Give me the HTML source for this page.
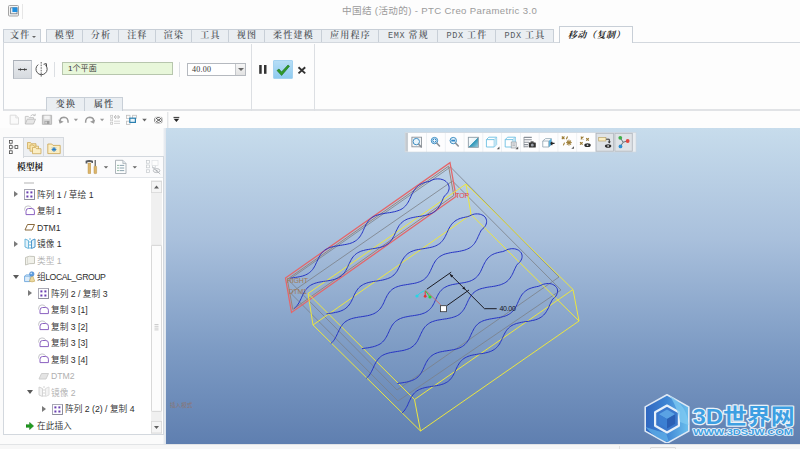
<!DOCTYPE html>
<html lang="zh-CN">
<head>
<meta charset="utf-8">
<title>中国结 (活动的) - PTC Creo Parametric 3.0</title>
<style>
*{box-sizing:border-box;margin:0;padding:0}
html,body{width:800px;height:449px;overflow:hidden;background:#fdfdfd}
body{position:relative;font-family:"Liberation Sans","Noto Sans CJK SC",sans-serif;color:#333}
.abs{position:absolute}
#title{left:0;top:0;width:800px;height:29px;background:#fdfdfd}
#title .t{position:absolute;left:342px;top:2.500px;font-size:9.6px;color:#9b9b9b;white-space:nowrap;letter-spacing:.35px}
#tabs{left:0;top:29px;width:800px;height:14px;z-index:2}
.tab{position:absolute;top:0;height:13px;border:1px solid #c8cfd7;border-bottom:none;background:#eaeef2;font-family:"Liberation Serif","Noto Serif CJK SC",serif;font-weight:600;font-size:9px;line-height:11.5px;text-align:center;color:#55595e;white-space:nowrap;overflow:hidden;letter-spacing:1.2px;padding-left:1px}
.tab.act{background:#fdfdfd;font-style:italic;font-weight:700;color:#222;top:-3px;height:17px;line-height:16px;letter-spacing:.6px}
#ribbon{left:3px;top:42px;width:797px;height:69px;border-top:1px solid #d3d8de;border-left:1px solid #d3d8de;border-bottom:2px solid #e1e3e6;background:#fdfdfd}
#qbar{left:0;top:112px;width:800px;height:16px;background:#fdfdfd}
#left{left:0;top:128px;width:166px;height:316px;background:linear-gradient(90deg,#fbfbfb 0,#fbfbfb 163px,#e9edf2 164px,#dfe5ec 166px)}
#view{left:166px;top:128px;width:634px;height:316px;background:linear-gradient(180deg,#c7dcec 0%,#a9c0dc 35%,#7d9bc4 70%,#5f7fb0 100%)}
#status{left:0;top:444px;width:800px;height:5px;background:#f7f7f7;border-top:1px solid #e2e4e6}

.vsep{position:absolute;width:1px;background:#dcdfe3}
#btn1{left:13px;top:60px;width:19px;height:19px;border:1px solid #c3c8cf;border-top-color:#a9afb7;border-left-color:#b0b6be;background:linear-gradient(180deg,#eaecef,#d6dadf)}
#inp{left:62px;top:62px;width:111px;height:13px;border:1px solid #b7c6ad;background:#e8f7da;font-family:"Liberation Sans","Noto Sans CJK SC",sans-serif;font-size:8.1px;line-height:11px;padding-left:5px;color:#333;font-weight:350}
#combo{left:187px;top:63px;width:59px;height:13px;border:1px solid #b5b9bf;background:#fff;font-family:"Liberation Serif",serif;font-size:8px;line-height:11px;padding-left:4px;color:#333;letter-spacing:.25px}
#combo i{position:absolute;right:0;top:0;width:10px;height:11px;border-left:1px solid #c5c8cc;background:linear-gradient(180deg,#f6f6f6,#e2e2e2)}
#combo i:after{content:"";position:absolute;left:2px;top:4px;border:3px solid transparent;border-top:3px solid #666;border-bottom:none}
#chk{left:273px;top:60px;width:20px;height:19px;background:linear-gradient(180deg,#b7def6,#8fcbf0);border:1px solid #a5d3f1;border-radius:1px}
.btab{position:absolute;top:97px;height:14px;border:1px solid #c8cfd7;border-bottom:none;background:#eaeef2;font-family:"Liberation Serif","Noto Serif CJK SC",serif;font-weight:600;font-size:9px;line-height:12.5px;text-align:center;color:#44484d;letter-spacing:1.2px;padding-left:1px}
.ltab{position:absolute;top:137px;height:20px;width:21px;border:1px solid #d5d9de;background:#eef0f3}
#panel{left:3px;top:156px;width:161px;height:279px;border:1px solid #d3d8de;background:#fbfbfc}
#tree{left:4px;top:177px;width:159px;height:257px;border-top:1px solid #e3e6ea;background:#fff;overflow:hidden}
.ti{position:absolute;font-size:8.7px;line-height:12px;white-space:nowrap;color:#2e2e2e;font-weight:350}
.ti.g{color:#b0b0b0}
.ar{position:absolute;width:0;height:0}
.ar.r{border:3px solid transparent;border-left:4px solid #7a7a7a;border-right:none}
.ar.d{border:3px solid transparent;border-top:4px solid #5a5a5a;border-bottom:none}
#sb{left:150px;top:180px;width:11px;height:254px;background:#f1f1f1;border-left:1px solid #e3e3e3}
</style>
</head>
<body>
<div id="title" class="abs"><span class="t">中国结 (活动的) - PTC Creo Parametric 3.0</span><svg class="abs" style="left:7px;top:4px" width="18" height="16" viewBox="0 0 18 16"><rect x="1.500" y="1.500" width="10" height="10.500" rx="1" fill="#f4f4f4" stroke="#9a9a9a" stroke-width=".9"/><rect x="3.600" y="3.800" width="6.400" height="6" fill="#e9eef2" stroke="#6c7780" stroke-width=".8"/><rect x="5.400" y="3.400" width="5" height="4.600" fill="#1f8fe0"/><path d="M15.500 0v15" stroke="#e3e3e3" stroke-width=".9"/></svg></div>
<div id="tabs" class="abs">
<div class="tab" style="left:3px;width:38px;text-align:left;padding-left:6px">文件<i style="position:absolute;left:27.500px;top:5.500px;border:2.300px solid transparent;border-top:2.600px solid #666;border-bottom:none"></i></div>
<div class="tab" style="left:46px;width:37px">模型</div>
<div class="tab" style="left:82px;width:37px">分析</div>
<div class="tab" style="left:118px;width:38px">注释</div>
<div class="tab" style="left:155px;width:37px">渲染</div>
<div class="tab" style="left:191px;width:38px">工具</div>
<div class="tab" style="left:228px;width:37px">视图</div>
<div class="tab" style="left:264px;width:58px">柔性建模</div>
<div class="tab" style="left:321px;width:58px">应用程序</div>
<div class="tab" style="left:378px;width:60px"><span style="font-family:'Liberation Mono',monospace;font-weight:400;font-size:8.500px;letter-spacing:.6px">EMX</span> 常规</div>
<div class="tab" style="left:437px;width:59px"><span style="font-family:'Liberation Mono',monospace;font-weight:400;font-size:8.500px;letter-spacing:.6px">PDX</span> 工件</div>
<div class="tab" style="left:495px;width:59px"><span style="font-family:'Liberation Mono',monospace;font-weight:400;font-size:8.500px;letter-spacing:.6px">PDX</span> 工具</div>
<div class="tab act" style="left:559px;width:74px">移动（复制）</div>
</div>
<div id="ribbon" class="abs"></div>
<div id="qbar" class="abs"><svg width="200" height="16" viewBox="0 112 200 16">
<path d="M10.200 115.200h5.600l2.700 2.700v6.300h-8.300z" fill="#fafafa" stroke="#d9d9d9" stroke-width=".9"/><path d="M15.800 115.200v2.700h2.700" fill="none" stroke="#d9d9d9" stroke-width=".8"/>
<path d="M25.300 124v-7.600h3l1 1.200h4.200v1.600" fill="#f1f1f1" stroke="#c4c4c4" stroke-width=".9"/><path d="M25.300 124l2-4.800h8.200l-2 4.800z" fill="#e6e6e6" stroke="#bdbdbd" stroke-width=".9"/><path d="M30.500 116q2-2.200 4.200-.8M35.200 113.800v1.800h-1.800" fill="none" stroke="#bdbdbd" stroke-width=".9"/>
<path d="M42.400 115.300h9.200v9h-9.200z" fill="#d2d2d2" stroke="#b3b3b3" stroke-width=".9"/><rect x="44.200" y="115.700" width="5.600" height="3.600" fill="#f3f3f3"/><rect x="44.600" y="121" width="4.800" height="3" fill="#9f9f9f"/><rect x="45.400" y="121.600" width="1.300" height="2" fill="#e8e8e8"/>
<path d="M60.500 122.600q-1.600-5 3.400-5.400q4.400 0 4.200 5.600" fill="none" stroke="#9b9b9b" stroke-width="1.500"/><path d="M58.500 119.400l1.200 4.400l4-2z" fill="#9b9b9b"/>
<path d="M73.800 118.700h4.200l-2.100 2.500z" fill="#9a9a9a"/>
<path d="M93.200 122.600q1.600-5-3.400-5.400q-4.400 0-4.200 5.600" fill="none" stroke="#9b9b9b" stroke-width="1.500"/><path d="M95.200 119.400l-1.200 4.400l-4-2z" fill="#9b9b9b"/>
<path d="M100 118.700h4.200l-2.100 2.500z" fill="#9a9a9a"/>
<g fill="none" stroke="#c9c9c9" stroke-width=".8"><rect x="110.600" y="115.300" width="2" height="2"/><rect x="110.600" y="118.800" width="2" height="2"/><rect x="110.600" y="122.300" width="2" height="2"/><path d="M114 121.200h6M114 123.400h6"/></g>
<path d="M114.400 117h5M117.600 115l2 2l-2 2M116 115l-1.800 2l1.800 2" fill="none" stroke="#b5b5b5" stroke-width=".9"/>
<g fill="#fafafa" stroke="#bdbdbd" stroke-width=".8"><rect x="126.400" y="115.300" width="3.600" height="3.200"/><rect x="132.600" y="115.300" width="3.800" height="3.200"/><rect x="126.400" y="121.200" width="3.600" height="3.200"/></g>
<rect x="129.800" y="118.200" width="5.600" height="4.200" fill="#eaf5fb" stroke="#2a7fb0" stroke-width="1.200"/>
<path d="M142.200 118.700h4.600l-2.300 2.700z" fill="#666"/>
<path d="M154.800 117.400h7v5.400h-7z" fill="none" stroke="#555" stroke-width=".9"/><path d="M154.500 117l7.600 6.200M162.100 117l-7.600 6.200" stroke="#fdfdfd" stroke-width="2.200"/><path d="M155.600 117.800l6 4.600M161.600 117.800l-6 4.600" stroke="#555" stroke-width="1"/>
<path d="M167.800 111v17" stroke="#d6d9dd" stroke-width=".9"/>
<path d="M173.500 117.400h5.800" stroke="#333" stroke-width="1"/><path d="M173.600 118.800h5.600l-2.800 3.300z" fill="#222"/>
</svg></div>
<div id="left" class="abs"></div>
<div id="btn1" class="abs"><svg width="17" height="17" viewBox="0.5 0.5 17 17"><path d="M6 9H12M6.200 9L7.400 8M6.200 9L7.400 10M11.800 9L10.600 8M11.800 9L10.600 10" stroke="#3a3a3a" stroke-width=".9" fill="none"/><circle cx="5.400" cy="9" r=".8" fill="#3a3a3a"/><circle cx="12.600" cy="9" r=".8" fill="#3a3a3a"/></svg></div>
<svg class="abs" style="left:34px;top:60px" width="16" height="20" viewBox="0 0 16 20"><path d="M7.200 2V16.800" stroke="#555" stroke-width=".9" stroke-dasharray="1.600 1"/><path d="M4.200 4.600A5.600 5.600 0 1 0 11.600 5.200" fill="none" stroke="#555" stroke-width="1"/><path d="M9.600 4.300L12.300 3.600L12.600 6.400" fill="none" stroke="#444" stroke-width="1"/></svg>
<div class="vsep" style="left:54px;top:62px;height:15px"></div>
<div id="inp" class="abs">1个平面</div>
<div class="vsep" style="left:179px;top:62px;height:15px"></div>
<div id="combo" class="abs">40.00<i></i></div>
<div class="vsep" style="left:251px;top:44px;height:67px"></div>
<svg class="abs" style="left:258px;top:64px" width="10" height="11" viewBox="0 0 10 11"><rect x="1.200" y="1" width="2.500" height="8.800" fill="#333"/><rect x="6" y="1" width="2.500" height="8.800" fill="#333"/></svg>
<div id="chk" class="abs"><svg width="18" height="18" viewBox="0 0 18 18"><path d="M3 9.5L5 8L7.5 11L14 4L15.5 5.2L7.6 14.5Z" fill="#2e9a2a" stroke="#1c6f1b" stroke-width=".6"/></svg></div>
<svg class="abs" style="left:297px;top:65px" width="10" height="10" viewBox="0 0 10 10"><path d="M1.500 2.200L8.200 8.400M8.200 2.200L1.500 8.400" stroke="#333" stroke-width="1.900"/></svg>
<div class="vsep" style="left:314px;top:44px;height:67px"></div>
<div class="btab" style="left:46px;width:39px">变换</div><div class="btab" style="left:84px;width:39px">属性</div>
<div id="panel" class="abs"></div>
<div class="ltab" style="left:23px"></div><div class="ltab" style="left:43px"></div><div class="ltab" style="left:3px;background:#fbfbfc;border-bottom:none;height:21px"></div>
<div class="abs" style="left:17px;top:161px;font-family:'Liberation Serif','Noto Serif CJK SC',serif;font-weight:700;font-size:8.8px;line-height:12px;color:#222">模型树</div>
<div id="tree" class="abs"></div>

<svg class="abs" style="left:3px;top:137px" width="62" height="20" viewBox="0 0 62 20">
<g fill="#fff" stroke="#4a4a4a" stroke-width=".8"><rect x="6.4" y="3.4" width="2.8" height="2.8"/><rect x="6.4" y="8.6" width="2.8" height="2.8"/><rect x="6.4" y="13.8" width="2.8" height="2.8"/><rect x="12" y="8.6" width="2.8" height="2.8"/></g>
<path d="M7.8 6.2v2.4M7.8 11.4v2.4M9.2 10h2.8" stroke="#8a8a8a" stroke-width=".6"/>
<g stroke="#c9a24e" stroke-width=".7"><path d="M24.5 5.5h3l1 1.2h4.5v5h-8.5z" fill="#f7e3a8"/><path d="M27 8h3l1 1.2h4.5v5h-8.5z" fill="#f9e8b4"/><path d="M29.5 10.5h3l1 1.200h4.500v5h-8.500z" fill="#fbeec4"/></g>
<path d="M44.800 7h4l1.200 1.400h7.200v8.200h-12.400z" fill="#fbeec4" stroke="#c9a24e" stroke-width=".8"/>
<path d="M51 10v4.800M48.600 12.400h4.800M49.300 10.700l3.400 3.400M52.700 10.700l-3.400 3.400" stroke="#1f78c8" stroke-width="1"/>
</svg>
<svg class="abs" style="left:84px;top:158px" width="80" height="18" viewBox="0 0 80 18">
<path d="M1.600 2.800q3.600-1.600 7.400 0v2.200h-1.600v-1h-4v1.600h-1.800z" fill="#55595f"/>
<rect x="4" y="5" width="2.800" height="10.600" fill="#dcb56a" stroke="#b58f45" stroke-width=".4"/>
<path d="M11.200 2v6.400" stroke="#4a4a4a" stroke-width="1.100"/>
<rect x="10" y="8.200" width="2.600" height="7.400" rx=".6" fill="#dcb56a" stroke="#b58f45" stroke-width=".5"/>
<path d="M19.800 8.200h4.400l-2.200 2.400z" fill="#666"/>
<path d="M31.500 2.300h7.300l3.200 3.200v10h-10.500z" fill="#fcfdfd" stroke="#9aa2aa" stroke-width=".8"/>
<path d="M38.800 2.300v3.200h3.200" fill="#dde5ea" stroke="#9aa2aa" stroke-width=".6"/>
<path d="M35.600 7.400h4.600M35.600 10h4.600M35.600 12.600h4.600" stroke="#7f98a6" stroke-width=".9"/>
<path d="M33.400 7.400h1.200M33.400 10h1.200M33.400 12.600h1.200" stroke="#4d8f6c" stroke-width="1"/>
<path d="M48.600 8.200h4.400l-2.200 2.400z" fill="#666"/>
<g fill="#fdfdfd" stroke="#c4c8cc" stroke-width=".7"><rect x="62.600" y="2.400" width="2.800" height="2.800"/><rect x="62.600" y="7" width="2.800" height="2.800"/><rect x="62.600" y="11.800" width="2.800" height="2.800"/><rect x="68.400" y="7" width="2.800" height="2.800"/><rect x="68" y="2.400" width="6" height="5" stroke="#dfe2e5"/></g>
<ellipse cx="72.600" cy="12.600" rx="3.300" ry="2" fill="none" stroke="#a9adb2" stroke-width=".8"/><circle cx="72.600" cy="12.600" r=".9" fill="#a9adb2"/><path d="M69 9.600l7.200 6.400" stroke="#a9adb2" stroke-width=".8"/>
</svg>
<svg class="abs" style="left:151px;top:180px" width="11" height="254" viewBox="0 0 11 254">
<rect x="0" y="0" width="11" height="254" fill="#f0f0f0"/>
<rect x=".4" y="1.400" width="10.200" height="11.200" fill="#f5f5f5" stroke="#d8d8d8" stroke-width=".8"/>
<path d="M3 8.400h5l-2.500-3z" fill="#606060"/>
<rect x=".4" y="65.400" width="10.200" height="166" rx="1" fill="#fcfcfc" stroke="#cdcdcd" stroke-width=".8"/>
<path d="M3.500 144.500h4M3.500 146.300h4M3.500 148.100h4M3.500 149.900h4" stroke="#b8b8b8" stroke-width=".7"/>
<rect x=".4" y="241.400" width="10.200" height="11.600" fill="#f5f5f5" stroke="#d8d8d8" stroke-width=".8"/>
<path d="M3 246h5l-2.500 3z" fill="#606060"/>
</svg>
<div class="abs" style="left:24px;top:182px;width:10px;height:2px;background:#d9d9d9"></div>

<!--TREE-->
<div class="ar r" style="left:14.3px;top:191.3px"></div>
<svg class="abs" style="left:24.3px;top:189.1px" width="11" height="11" viewBox="0 0 11 11"><rect x=".5" y=".5" width="10" height="10" fill="#fdfdff" stroke="#a9a9b4"/><path d="M.5 10.500h10v-10" fill="none" stroke="#8d8d9a"/><rect x="2.400" y="2.400" width="2" height="2" fill="#6a3fb0"/><rect x="6.400" y="2.400" width="2" height="2" fill="#6a3fb0"/><rect x="2.400" y="6.500" width="2" height="2" fill="#6a3fb0"/><rect x="6.400" y="6.500" width="2" height="2" fill="#6a3fb0"/></svg>
<div class="ti" style="left:37.0px;top:188.6px">阵列 1 / 草绘 1</div>
<svg class="abs" style="left:24.3px;top:204.9px" width="12" height="11" viewBox="0 0 12 11"><path d="M.6 5.500V4.300Q.6 .9 4 .9Q7 .9 7.600 3" fill="none" stroke="#bdbdc2" stroke-width=".9"/><path d="M2 9.600V6.200Q2 3.500 4.600 3.500H7.800Q10.400 3.500 10.400 6.200V9.600Z" fill="#fff" stroke="#8a60c0" stroke-width="1"/></svg>
<div class="ti" style="left:37.0px;top:205.1px">复制 1</div>
<svg class="abs" style="left:24.3px;top:223.0px" width="12" height="9" viewBox="0 0 12 9"><path d="M3.500 1.500H10.500L8 7H1Z" fill="#fff" stroke="#8a6a3c" stroke-width="1"/></svg>
<div class="ti" style="left:37.0px;top:221.6px">DTM1</div>
<div class="ar r" style="left:14.3px;top:240.8px"></div>
<svg class="abs" style="left:24.3px;top:237.8px" width="12" height="12" viewBox="0 0 12 12"><path d="M1 1L4.500 2.500V10.500L1 9Z" fill="#e4f2fa" stroke="#5fb0d8" stroke-width=".9"/><path d="M11 1L7.500 2.500V10.500L11 9Z" fill="#e4f2fa" stroke="#3d8fc8" stroke-width=".9"/><path d="M6 0V12" stroke="#5fb0d8" stroke-width=".9" stroke-dasharray="2 1"/></svg>
<div class="ti" style="left:37.0px;top:238.1px">镜像 1</div>
<svg class="abs" style="left:24.3px;top:254.8px" width="12" height="11" viewBox="0 0 12 11"><path d="M1.500 2.500Q5 .5 10.500 1.500V8.500Q5 8 1.500 10Z" fill="#f1f1ea" stroke="#c6c6bc" stroke-width="1"/><path d="M3.500 1.600V8.800" fill="none" stroke="#d4d4cb" stroke-width=".8"/></svg>
<div class="ti g" style="left:37.0px;top:254.6px">类型 1</div>
<div class="ar d" style="left:13.3px;top:274.8px"></div>
<svg class="abs" style="left:24.3px;top:270.8px" width="12" height="12" viewBox="0 0 12 12"><path d="M.6 5.200H6.200V10.600H.6Z" fill="#dcecf9" stroke="#5a9bd8" stroke-width=".8"/><path d="M.6 5.200L2.200 3.800H7.600L6.200 5.200" fill="#b9d9f3" stroke="#5a9bd8" stroke-width=".6"/><path d="M8.200 3.600L10.800 10.200Q8 11.600 5.400 10.200Z" fill="#ecd9a0" stroke="#bfa457" stroke-width=".6"/><circle cx="7.800" cy="3" r="2.300" fill="#5f9fe0" stroke="#3a78c4" stroke-width=".5"/><circle cx="7.200" cy="2.400" r=".8" fill="#cfe4f7"/></svg>
<div class="ti" style="left:37.0px;top:271.1px;letter-spacing:-.45px">组LOCAL_GROUP</div>
<div class="ar r" style="left:28.3px;top:290.3px"></div>
<svg class="abs" style="left:38.3px;top:288.1px" width="11" height="11" viewBox="0 0 11 11"><rect x=".5" y=".5" width="10" height="10" fill="#fdfdff" stroke="#a9a9b4"/><path d="M.5 10.500h10v-10" fill="none" stroke="#8d8d9a"/><rect x="2.400" y="2.400" width="2" height="2" fill="#6a3fb0"/><rect x="6.400" y="2.400" width="2" height="2" fill="#6a3fb0"/><rect x="2.400" y="6.500" width="2" height="2" fill="#6a3fb0"/><rect x="6.400" y="6.500" width="2" height="2" fill="#6a3fb0"/></svg>
<div class="ti" style="left:51.0px;top:287.6px">阵列 2 / 复制 3</div>
<svg class="abs" style="left:38.3px;top:303.9px" width="12" height="11" viewBox="0 0 12 11"><path d="M.6 5.500V4.300Q.6 .9 4 .9Q7 .9 7.600 3" fill="none" stroke="#bdbdc2" stroke-width=".9"/><path d="M2 9.600V6.200Q2 3.500 4.600 3.500H7.800Q10.400 3.500 10.400 6.200V9.600Z" fill="#fff" stroke="#8a60c0" stroke-width="1"/></svg>
<div class="ti" style="left:51.0px;top:304.1px">复制 3 [1]</div>
<svg class="abs" style="left:38.3px;top:320.4px" width="12" height="11" viewBox="0 0 12 11"><path d="M.6 5.500V4.300Q.6 .9 4 .9Q7 .9 7.600 3" fill="none" stroke="#bdbdc2" stroke-width=".9"/><path d="M2 9.600V6.200Q2 3.500 4.600 3.500H7.800Q10.400 3.500 10.400 6.200V9.600Z" fill="#fff" stroke="#8a60c0" stroke-width="1"/></svg>
<div class="ti" style="left:51.0px;top:320.6px">复制 3 [2]</div>
<svg class="abs" style="left:38.3px;top:336.9px" width="12" height="11" viewBox="0 0 12 11"><path d="M.6 5.500V4.300Q.6 .9 4 .9Q7 .9 7.600 3" fill="none" stroke="#bdbdc2" stroke-width=".9"/><path d="M2 9.600V6.200Q2 3.500 4.600 3.500H7.800Q10.400 3.500 10.400 6.200V9.600Z" fill="#fff" stroke="#8a60c0" stroke-width="1"/></svg>
<div class="ti" style="left:51.0px;top:337.1px">复制 3 [3]</div>
<svg class="abs" style="left:38.3px;top:353.4px" width="12" height="11" viewBox="0 0 12 11"><path d="M.6 5.500V4.300Q.6 .9 4 .9Q7 .9 7.600 3" fill="none" stroke="#bdbdc2" stroke-width=".9"/><path d="M2 9.600V6.200Q2 3.500 4.600 3.500H7.800Q10.400 3.500 10.400 6.200V9.600Z" fill="#fff" stroke="#8a60c0" stroke-width="1"/></svg>
<div class="ti" style="left:51.0px;top:353.6px">复制 3 [4]</div>
<svg class="abs" style="left:38.3px;top:371.5px" width="12" height="9" viewBox="0 0 12 9"><path d="M3.500 1.500H10.500L8 7H1Z" fill="#e4e4e4" stroke="#cfcfcf" stroke-width="1"/></svg>
<div class="ti g" style="left:51.0px;top:370.1px">DTM2</div>
<div class="ar d" style="left:27.3px;top:390.3px"></div>
<svg class="abs" style="left:38.3px;top:386.3px" width="12" height="12" viewBox="0 0 12 12"><path d="M1 1L4.500 2.500V10.500L1 9Z" fill="#f3f3f3" stroke="#cfcfcf" stroke-width=".9"/><path d="M11 1L7.500 2.500V10.500L11 9Z" fill="#f3f3f3" stroke="#dadada" stroke-width=".9"/><path d="M6 0V12" stroke="#cfcfcf" stroke-width=".9" stroke-dasharray="2 1"/></svg>
<div class="ti g" style="left:51.0px;top:386.6px">镜像 2</div>
<div class="ar r" style="left:42.3px;top:405.8px"></div>
<svg class="abs" style="left:52.3px;top:403.6px" width="11" height="11" viewBox="0 0 11 11"><rect x=".5" y=".5" width="10" height="10" fill="#fdfdff" stroke="#a9a9b4"/><path d="M.5 10.500h10v-10" fill="none" stroke="#8d8d9a"/><rect x="2.400" y="2.400" width="2" height="2" fill="#6a3fb0"/><rect x="6.400" y="2.400" width="2" height="2" fill="#6a3fb0"/><rect x="2.400" y="6.500" width="2" height="2" fill="#6a3fb0"/><rect x="6.400" y="6.500" width="2" height="2" fill="#6a3fb0"/></svg>
<div class="ti" style="left:65.0px;top:403.1px">阵列 2 (2) / 复制 4</div>
<svg class="abs" style="left:25.5px;top:421.6px" width="8" height="8" viewBox="0 0 8 8"><path d="M0 2.700H3.600V.4L7.600 4L3.600 7.600V5.300H0Z" fill="#1f9d1f" stroke="#0c6d0c" stroke-width=".5"/></svg>
<div class="ti" style="left:37px;top:419.600px">在此插入</div>
<!--/TREE-->
<div id="view" class="abs"><!--WIRE--><svg id="wire" width="634" height="315" viewBox="0 0 634 315" style="position:absolute;left:0;top:0">
<path d="M122.5 152.0 L284.5 39.0 L393.0 149.0 L231.0 262.0Z M124.5 165.0 L286.5 53.0 L395.0 162.0 L232.0 273.0Z" fill="none" stroke="#7b8088" stroke-width=".8"/>
<path d="M121.3 151.3 L282.6 38.2 L287.8 67.5 L126.8 181.5Z" fill="none" stroke="#9a8378" stroke-width="1"/>
<path d="M119.5 150.0 L284.0 34.6 L290.0 68.5 L125.5 184.5Z" fill="none" stroke="#e4676a" stroke-width="1.3"/>
<path d="M300.0 56.0 L407.0 161.5 L248.5 271.5 L142.0 165.5 L300.0 56.0 M305.0 86.5 L413.0 193.0 L254.5 303.0 L147.0 197.0 L305.0 86.5 M300.0 56.0 L305.0 86.5 M407.0 161.5 L413.0 193.0 M248.5 271.5 L254.5 303.0 M142.0 165.5 L147.0 197.0" fill="none" stroke="#ece63f" stroke-width="1"/>
<path d="M124.2 150.2 L126.0 150.0 L127.8 149.7 L129.6 149.4 L131.4 149.1 L133.2 148.8 L134.9 148.4 L136.6 148.0 L138.1 147.5 L139.6 146.9 L141.1 146.2 L142.4 145.4 L143.6 144.5 L144.7 143.6 L145.7 142.5 L146.7 141.4 L147.5 140.2 L148.3 138.9 L149.1 137.5 L149.7 136.1 L150.4 134.7 L151.1 133.3 L151.7 131.9 L152.4 130.5 L153.1 129.1 L153.8 127.8 L154.6 126.5 L155.5 125.3 L156.5 124.2 L157.5 123.2 L158.7 122.2 L160.0 121.4 L161.3 120.7 L162.7 120.0 L164.3 119.4 L165.9 119.0 L167.6 118.5 L169.3 118.2 L171.1 117.9 L172.9 117.6 L174.7 117.3 L176.5 117.0 L178.3 116.7 L180.1 116.4 L181.8 116.0 L183.5 115.6 L185.1 115.1 L186.6 114.5 L188.0 113.8 L189.3 113.0 L190.5 112.2 L191.6 111.2 L192.7 110.2 L193.6 109.0 L194.5 107.8 L195.2 106.5 L196.0 105.2 L196.7 103.8 L197.3 102.4 L198.0 100.9 L198.6 99.5 L199.3 98.1 L200.0 96.7 L200.7 95.4 L201.6 94.1 L202.4 92.9 L203.4 91.8 L204.5 90.8 L205.6 89.9 L206.9 89.0 L208.2 88.3 L209.7 87.6 L211.2 87.1 L212.8 86.6 L214.5 86.2 L216.2 85.8 L218.0 85.5 L219.8 85.2 L221.6 84.9 L223.4 84.7 L225.2 84.4 L227.0 84.0 L228.7 83.7 L230.4 83.2 L232.0 82.7 L233.5 82.1 L234.9 81.5 L236.2 80.7 L237.4 79.8 L238.5 78.8 L239.6 77.8 L240.5 76.7 L241.4 75.4 L242.2 74.1 L242.9 72.8 L243.6 71.4 L244.2 70.0 L244.9 68.6 L245.5 67.1 L246.2 65.7 L246.9 64.4 L247.7 63.0 L248.5 61.8 L249.4 60.6 L250.3 59.5 L251.4 58.4 L252.5 57.5 L253.8 56.7 L255.1 55.9 L256.6 55.3 L258.1 54.7 L259.7 54.2 L261.4 53.8 L263.1 53.5 L265.1 52.5 L266.5 51.9 L268.1 51.3 L269.7 51.0 L271.4 50.9 L273.0 50.9 L274.6 51.1 L276.1 51.5 L277.6 52.0 L278.9 52.7 L280.1 53.6 L281.1 54.6 L281.9 55.7 L282.5 56.9 L282.9 58.1 L283.1 59.4 L283.1 60.8 L282.8 62.1 L282.3 63.4 L281.7 64.6 L280.8 65.8 L279.7 66.9 L278.5 67.8 L277.8 69.2 L277.1 70.6 L276.5 72.1 L275.8 73.5 L275.2 74.9 L274.5 76.3 L273.8 77.6 L273.0 78.9 L272.1 80.1 L271.2 81.3 L270.1 82.3 L269.0 83.3 L267.8 84.2 L266.5 84.9 L265.1 85.6 L263.6 86.2 L262.0 86.7 L260.3 87.2 L258.6 87.5 L256.8 87.9 L255.0 88.2 L253.2 88.4 L251.4 88.7 L249.6 89.0 L247.8 89.3 L246.1 89.7 L244.4 90.1 L242.8 90.6 L241.3 91.1 L239.8 91.8 L238.5 92.5 L237.2 93.4 L236.1 94.3 L235.0 95.3 L234.0 96.4 L233.1 97.6 L232.3 98.9 L231.6 100.2 L230.9 101.6 L230.2 103.0 L229.6 104.4 L228.9 105.9 L228.3 107.3 L227.6 108.7 L226.8 110.0 L226.0 111.3 L225.2 112.5 L224.2 113.7 L223.2 114.7 L222.1 115.7 L220.9 116.5 L219.6 117.3 L218.2 118.0 L216.7 118.6 L215.1 119.1 L213.4 119.5 L211.7 119.9 L209.9 120.2 L208.1 120.5 L206.3 120.8 L204.5 121.1 L202.7 121.4 L200.9 121.7 L199.2 122.0 L197.5 122.5 L195.9 122.9 L194.3 123.5 L192.9 124.2 L191.5 124.9 L190.3 125.7 L189.1 126.7 L188.1 127.7 L187.1 128.8 L186.2 130.0 L185.4 131.3 L184.7 132.6 L184.0 134.0 L183.3 135.4 L182.6 136.8 L182.0 138.2 L181.3 139.6 L180.7 141.0 L179.9 142.4 L179.1 143.7 L178.3 144.9 L177.3 146.0 L176.3 147.1 L175.2 148.0 L174.0 148.9 L172.6 149.7 L171.2 150.4 L169.7 150.9 L168.2 151.5 L166.5 151.9 L164.8 152.3 L163.0 152.6 L161.2 152.9 L159.4 153.2 L157.6 153.4 L155.8 153.7 L154.0 154.0 L152.2 154.4 L150.6 154.8 L148.9 155.3 L147.4 155.9 L146.0 156.5 L144.6 157.3 L143.4 158.1 L142.2 159.0 L141.2 160.1 L140.2 161.2 L139.3 162.4 L138.5 163.6 L137.7 165.0 L137.0 166.3 L136.4 167.7 L135.7 169.2 L135.1 170.6 L134.4 172.0 L133.7 173.4 L133.0 174.7 L132.2 176.0 L131.4 177.2 L130.4 178.4 L129.4 179.4 L128.3 180.4" fill="none" stroke="#2634c4" stroke-width="1" stroke-linejoin="round"/>
<path d="M160.5 185.9 L162.3 185.6 L164.1 185.3 L165.9 185.1 L167.7 184.8 L169.5 184.4 L171.2 184.1 L172.9 183.6 L174.5 183.1 L176.0 182.5 L177.4 181.8 L178.7 181.1 L179.9 180.2 L181.0 179.2 L182.1 178.2 L183.0 177.0 L183.9 175.8 L184.7 174.5 L185.4 173.2 L186.1 171.8 L186.7 170.4 L187.4 169.0 L188.0 167.5 L188.7 166.1 L189.4 164.7 L190.2 163.4 L191.0 162.2 L191.8 161.0 L192.8 159.8 L193.9 158.8 L195.0 157.9 L196.3 157.1 L197.6 156.3 L199.1 155.7 L200.6 155.1 L202.2 154.6 L203.9 154.2 L205.6 153.8 L207.4 153.5 L209.2 153.2 L211.0 153.0 L212.9 152.7 L214.7 152.4 L216.4 152.1 L218.1 151.7 L219.8 151.2 L221.4 150.7 L222.9 150.1 L224.3 149.5 L225.6 148.7 L226.8 147.8 L228.0 146.9 L229.0 145.8 L229.9 144.7 L230.8 143.5 L231.6 142.2 L232.3 140.8 L233.0 139.4 L233.7 138.0 L234.3 136.6 L234.9 135.2 L235.6 133.8 L236.3 132.4 L237.1 131.0 L237.9 129.8 L238.8 128.6 L239.7 127.5 L240.8 126.5 L241.9 125.5 L243.2 124.7 L244.5 123.9 L246.0 123.3 L247.5 122.7 L249.1 122.2 L250.8 121.8 L252.5 121.5 L254.3 121.2 L256.1 120.9 L258.0 120.6 L259.8 120.3 L261.6 120.0 L263.3 119.7 L265.1 119.3 L266.7 118.9 L268.3 118.4 L269.8 117.8 L271.2 117.1 L272.5 116.3 L273.8 115.5 L274.9 114.5 L275.9 113.4 L276.8 112.3 L277.7 111.1 L278.5 109.8 L279.2 108.5 L279.9 107.1 L280.6 105.6 L281.2 104.2 L281.9 102.8 L282.5 101.4 L283.2 100.0 L284.0 98.7 L284.8 97.4 L285.7 96.2 L286.7 95.1 L287.7 94.1 L288.9 93.2 L290.1 92.3 L291.5 91.6 L292.9 90.9 L294.4 90.4 L296.0 89.9 L297.7 89.5 L299.5 89.1 L301.2 88.8 L303.8 87.8 L305.2 87.1 L306.8 86.5 L308.3 86.1 L309.9 85.9 L311.5 85.9 L313.0 86.0 L314.4 86.3 L315.8 86.8 L317.0 87.4 L318.1 88.1 L319.0 89.0 L319.7 90.0 L320.2 91.1 L320.5 92.3 L320.6 93.5 L320.5 94.8 L320.2 96.0 L319.7 97.3 L318.9 98.5 L318.0 99.6 L316.9 100.7 L315.7 101.6 L314.9 102.9 L314.2 104.3 L313.5 105.7 L312.9 107.1 L312.2 108.5 L311.6 109.9 L310.9 111.3 L310.2 112.7 L309.4 114.0 L308.6 115.3 L307.7 116.4 L306.7 117.5 L305.6 118.5 L304.4 119.4 L303.1 120.2 L301.7 120.9 L300.3 121.5 L298.7 122.1 L297.1 122.5 L295.4 122.9 L293.6 123.3 L291.8 123.6 L290.0 123.9 L288.2 124.1 L286.4 124.4 L284.6 124.7 L282.8 125.1 L281.1 125.5 L279.5 125.9 L277.9 126.4 L276.5 127.1 L275.1 127.8 L273.8 128.6 L272.6 129.5 L271.5 130.5 L270.5 131.6 L269.6 132.7 L268.8 134.0 L268.0 135.3 L267.3 136.6 L266.6 138.0 L266.0 139.5 L265.3 140.9 L264.7 142.3 L264.0 143.7 L263.3 145.1 L262.5 146.4 L261.7 147.6 L260.8 148.8 L259.8 149.9 L258.7 150.9 L257.5 151.8 L256.2 152.6 L254.8 153.3 L253.3 153.9 L251.8 154.4 L250.2 154.9 L248.5 155.3 L246.7 155.6 L244.9 155.9 L243.1 156.2 L241.3 156.5 L239.5 156.8 L237.7 157.1 L235.9 157.4 L234.2 157.8 L232.6 158.3 L231.0 158.8 L229.5 159.4 L228.2 160.1 L226.9 160.9 L225.7 161.8 L224.6 162.8 L223.6 163.9 L222.7 165.1 L221.9 166.3 L221.1 167.6 L220.4 169.0 L219.7 170.4 L219.0 171.8 L218.4 173.3 L217.8 174.7 L217.1 176.1 L216.4 177.4 L215.6 178.7 L214.8 180.0 L213.8 181.2 L212.8 182.2 L211.8 183.2 L210.6 184.1 L209.3 184.9 L207.9 185.7 L206.4 186.3 L204.9 186.8 L203.2 187.3 L201.5 187.7 L199.8 188.0 L198.0 188.3 L196.2 188.6 L194.4 188.9 L192.5 189.1 L190.7 189.5 L189.0 189.8 L187.3 190.2 L185.7 190.6 L184.1 191.2 L182.6 191.8 L181.3 192.5 L180.0 193.3 L178.8 194.2 L177.7 195.2 L176.7 196.3 L175.8 197.5 L174.9 198.7 L174.2 200.0 L173.5 201.4 L172.8 202.8 L172.1 204.2 L171.5 205.6 L170.8 207.0 L170.2 208.4 L169.4 209.8 L168.7 211.1 L167.8 212.4 L166.9 213.5 L165.9 214.6 L164.8 215.6" fill="none" stroke="#2634c4" stroke-width="1" stroke-linejoin="round"/>
<path d="M196.0 220.7 L197.8 220.4 L199.6 220.1 L201.4 219.9 L203.2 219.6 L205.0 219.2 L206.7 218.9 L208.4 218.4 L209.9 217.9 L211.4 217.3 L212.9 216.6 L214.2 215.9 L215.4 215.0 L216.5 214.0 L217.5 213.0 L218.5 211.8 L219.3 210.6 L220.1 209.3 L220.9 208.0 L221.5 206.6 L222.2 205.2 L222.9 203.8 L223.5 202.3 L224.2 200.9 L224.9 199.6 L225.6 198.2 L226.4 197.0 L227.3 195.8 L228.3 194.7 L229.3 193.6 L230.5 192.7 L231.8 191.9 L233.1 191.1 L234.5 190.5 L236.1 189.9 L237.7 189.4 L239.4 189.0 L241.1 188.7 L242.9 188.3 L244.7 188.0 L246.5 187.8 L248.3 187.5 L250.1 187.2 L251.9 186.9 L253.6 186.5 L255.3 186.1 L256.9 185.5 L258.4 185.0 L259.8 184.3 L261.1 183.5 L262.3 182.6 L263.4 181.7 L264.5 180.6 L265.4 179.5 L266.3 178.3 L267.0 177.0 L267.8 175.6 L268.5 174.2 L269.1 172.8 L269.8 171.4 L270.4 170.0 L271.1 168.6 L271.8 167.2 L272.5 165.9 L273.4 164.6 L274.2 163.4 L275.2 162.3 L276.3 161.3 L277.4 160.3 L278.7 159.5 L280.0 158.8 L281.5 158.1 L283.0 157.5 L284.6 157.1 L286.3 156.6 L288.0 156.3 L289.8 156.0 L291.6 155.7 L293.4 155.4 L295.3 155.1 L297.1 154.8 L298.8 154.5 L300.5 154.1 L302.2 153.7 L303.8 153.2 L305.3 152.6 L306.7 151.9 L308.0 151.1 L309.2 150.3 L310.3 149.3 L311.4 148.3 L312.3 147.1 L313.2 145.9 L314.0 144.6 L314.7 143.3 L315.4 141.9 L316.0 140.5 L316.7 139.0 L317.3 137.6 L318.0 136.2 L318.7 134.8 L319.5 133.5 L320.3 132.2 L321.2 131.0 L322.1 129.9 L323.2 128.9 L324.3 128.0 L325.6 127.1 L326.9 126.4 L328.4 125.7 L329.9 125.2 L331.5 124.7 L333.2 124.3 L334.9 123.9 L336.7 123.6 L339.3 122.6 L340.7 121.9 L342.2 121.3 L343.8 121.0 L345.4 120.7 L346.9 120.7 L348.5 120.8 L349.9 121.1 L351.2 121.6 L352.5 122.2 L353.5 123.0 L354.4 123.8 L355.2 124.8 L355.7 125.9 L356.0 127.1 L356.1 128.3 L356.0 129.6 L355.7 130.8 L355.1 132.1 L354.4 133.3 L353.5 134.4 L352.4 135.5 L351.2 136.4 L350.4 137.7 L349.7 139.1 L349.0 140.5 L348.4 141.9 L347.7 143.3 L347.1 144.8 L346.4 146.2 L345.7 147.5 L344.9 148.8 L344.1 150.1 L343.1 151.2 L342.2 152.3 L341.1 153.3 L339.9 154.2 L338.6 155.0 L337.2 155.7 L335.7 156.3 L334.2 156.9 L332.5 157.3 L330.9 157.7 L329.1 158.1 L327.3 158.4 L325.5 158.7 L323.7 158.9 L321.8 159.2 L320.1 159.5 L318.3 159.9 L316.6 160.3 L315.0 160.7 L313.4 161.3 L311.9 161.9 L310.6 162.6 L309.3 163.4 L308.1 164.3 L307.0 165.3 L306.0 166.4 L305.1 167.5 L304.3 168.8 L303.5 170.1 L302.8 171.4 L302.1 172.8 L301.4 174.3 L300.8 175.7 L300.1 177.1 L299.5 178.5 L298.7 179.9 L298.0 181.2 L297.1 182.4 L296.2 183.6 L295.2 184.7 L294.1 185.7 L293.0 186.6 L291.7 187.4 L290.3 188.1 L288.8 188.7 L287.3 189.2 L285.6 189.7 L283.9 190.1 L282.2 190.4 L280.4 190.8 L278.6 191.0 L276.7 191.3 L274.9 191.6 L273.1 191.9 L271.4 192.2 L269.7 192.6 L268.1 193.1 L266.5 193.6 L265.0 194.2 L263.6 195.0 L262.4 195.8 L261.2 196.7 L260.1 197.7 L259.1 198.7 L258.2 199.9 L257.3 201.1 L256.6 202.5 L255.9 203.8 L255.2 205.2 L254.5 206.6 L253.9 208.1 L253.2 209.5 L252.5 210.9 L251.8 212.3 L251.1 213.6 L250.2 214.8 L249.3 216.0 L248.3 217.1 L247.2 218.0 L246.0 218.9 L244.8 219.8 L243.4 220.5 L241.9 221.1 L240.3 221.6 L238.7 222.1 L237.0 222.5 L235.3 222.8 L233.5 223.1 L231.7 223.4 L229.8 223.7 L228.0 224.0 L226.2 224.3 L224.5 224.6 L222.8 225.0 L221.1 225.5 L219.6 226.0 L218.1 226.6 L216.7 227.3 L215.4 228.1 L214.3 229.0 L213.2 230.0 L212.2 231.1 L211.3 232.3 L210.4 233.5 L209.7 234.8 L208.9 236.2 L208.3 237.6 L207.6 239.0 L207.0 240.4 L206.3 241.9 L205.6 243.3 L204.9 244.6 L204.1 245.9 L203.3 247.2 L202.4 248.3 L201.4 249.4 L200.3 250.4" fill="none" stroke="#2634c4" stroke-width="1" stroke-linejoin="round"/>
<path d="M231.4 255.5 L233.2 255.2 L235.1 255.0 L236.9 254.7 L238.7 254.4 L240.5 254.1 L242.2 253.7 L243.8 253.2 L245.4 252.7 L246.9 252.1 L248.3 251.5 L249.6 250.7 L250.9 249.8 L252.0 248.9 L253.0 247.8 L254.0 246.7 L254.8 245.4 L255.6 244.2 L256.3 242.8 L257.0 241.4 L257.7 240.0 L258.3 238.6 L259.0 237.1 L259.6 235.7 L260.3 234.4 L261.1 233.0 L261.9 231.8 L262.8 230.6 L263.8 229.5 L264.8 228.4 L266.0 227.5 L267.2 226.7 L268.6 225.9 L270.0 225.3 L271.5 224.7 L273.2 224.2 L274.8 223.8 L276.6 223.5 L278.4 223.1 L280.2 222.9 L282.0 222.6 L283.8 222.3 L285.6 222.0 L287.4 221.7 L289.1 221.3 L290.8 220.9 L292.3 220.4 L293.8 219.8 L295.2 219.1 L296.6 218.3 L297.8 217.4 L298.9 216.5 L299.9 215.4 L300.9 214.3 L301.7 213.1 L302.5 211.8 L303.3 210.4 L303.9 209.1 L304.6 207.6 L305.2 206.2 L305.9 204.8 L306.6 203.4 L307.3 202.0 L308.0 200.7 L308.8 199.4 L309.7 198.2 L310.7 197.1 L311.7 196.1 L312.9 195.1 L314.1 194.3 L315.5 193.6 L316.9 192.9 L318.5 192.4 L320.1 191.9 L321.8 191.5 L323.5 191.1 L325.3 190.8 L327.1 190.5 L328.9 190.2 L330.7 189.9 L332.5 189.6 L334.3 189.3 L336.0 188.9 L337.7 188.5 L339.3 188.0 L340.8 187.4 L342.2 186.7 L343.5 185.9 L344.7 185.1 L345.8 184.1 L346.8 183.1 L347.8 181.9 L348.6 180.7 L349.4 179.4 L350.2 178.1 L350.9 176.7 L351.5 175.3 L352.2 173.8 L352.8 172.4 L353.5 171.0 L354.2 169.6 L354.9 168.3 L355.7 167.0 L356.6 165.8 L357.6 164.7 L358.7 163.7 L359.8 162.8 L361.1 161.9 L362.4 161.2 L363.9 160.5 L365.4 160.0 L367.0 159.5 L368.7 159.1 L370.4 158.7 L372.2 158.4 L374.7 157.4 L376.2 156.7 L377.7 156.2 L379.3 155.8 L380.9 155.6 L382.4 155.5 L383.9 155.6 L385.4 155.9 L386.7 156.4 L387.9 157.0 L389.0 157.8 L389.9 158.6 L390.6 159.6 L391.2 160.7 L391.5 161.9 L391.6 163.1 L391.5 164.4 L391.1 165.6 L390.6 166.9 L389.9 168.1 L389.0 169.2 L387.9 170.3 L386.6 171.2 L385.9 172.5 L385.2 173.9 L384.5 175.3 L383.8 176.7 L383.2 178.1 L382.5 179.6 L381.9 181.0 L381.1 182.3 L380.4 183.6 L379.5 184.9 L378.6 186.0 L377.6 187.1 L376.5 188.1 L375.3 189.0 L374.1 189.8 L372.7 190.5 L371.2 191.2 L369.7 191.7 L368.0 192.2 L366.3 192.5 L364.6 192.9 L362.8 193.2 L361.0 193.5 L359.1 193.7 L357.3 194.0 L355.5 194.3 L353.8 194.7 L352.1 195.1 L350.4 195.5 L348.9 196.1 L347.4 196.7 L346.0 197.4 L344.8 198.2 L343.6 199.1 L342.5 200.1 L341.5 201.2 L340.6 202.3 L339.7 203.6 L339.0 204.9 L338.2 206.3 L337.6 207.7 L336.9 209.1 L336.3 210.5 L335.6 211.9 L334.9 213.3 L334.2 214.7 L333.5 216.0 L332.6 217.2 L331.7 218.4 L330.7 219.5 L329.6 220.5 L328.4 221.4 L327.1 222.2 L325.8 222.9 L324.3 223.5 L322.7 224.1 L321.1 224.5 L319.4 224.9 L317.7 225.3 L315.9 225.6 L314.0 225.8 L312.2 226.1 L310.4 226.4 L308.6 226.7 L306.9 227.0 L305.2 227.4 L303.5 227.9 L302.0 228.4 L300.5 229.1 L299.1 229.8 L297.8 230.6 L296.6 231.5 L295.6 232.5 L294.6 233.5 L293.6 234.7 L292.8 236.0 L292.0 237.3 L291.3 238.6 L290.6 240.0 L290.0 241.4 L289.3 242.9 L288.7 244.3 L288.0 245.7 L287.3 247.1 L286.5 248.4 L285.7 249.6 L284.8 250.8 L283.8 251.9 L282.7 252.9 L281.5 253.8 L280.2 254.6 L278.8 255.3 L277.4 255.9 L275.8 256.4 L274.2 256.9 L272.5 257.3 L270.7 257.6 L268.9 257.9 L267.1 258.2 L265.3 258.5 L263.5 258.8 L261.7 259.1 L259.9 259.4 L258.2 259.8 L256.6 260.3 L255.0 260.8 L253.6 261.4 L252.2 262.1 L250.9 262.9 L249.7 263.8 L248.6 264.8 L247.6 265.9 L246.7 267.1 L245.9 268.3 L245.1 269.6 L244.4 271.0 L243.7 272.4 L243.1 273.8 L242.4 275.2 L241.8 276.7 L241.1 278.1 L240.4 279.4 L239.6 280.7 L238.8 282.0 L237.9 283.1 L236.9 284.2 L235.8 285.2" fill="none" stroke="#2634c4" stroke-width="1" stroke-linejoin="round"/>
<path d="M260.8 161.2 L285.2 144.2 M281.1 177.5 L303.0 162.0 M283.6 145.8 L318.5 180.7 L330.7 180.7" fill="none" stroke="#1c1c24" stroke-width="1"/>
<path d="M283.6 145.8 l3.6 1.6 l-2 2Z M299.8 162.0 l-3.6 -1.6 l2 -2Z" fill="#1c1c24"/>
<text x="333.5" y="183.2" font-family="Liberation Sans,sans-serif" font-size="7" fill="#15151c" letter-spacing="-.3">40.00</text>
<path d="M259.2 162.0 L274.6 176.7" stroke="#e05a5a" stroke-width=".8"/>
<path d="M251.0 168.0 Q254.0 164.5 258.6 162.6" stroke="#25d6e6" stroke-width="1" fill="none"/>
<path d="M259.2 168.0 L259.2 163.0" stroke="#e83030" stroke-width="1"/>
<path d="M264.0 169.0 L259.4 162.8" stroke="#22d43a" stroke-width="1"/>
<circle cx="251" cy="168" r="1.6" fill="#25d6e6"/><circle cx="259.2" cy="168.3" r="1.4" fill="#e83030"/><circle cx="264" cy="169" r="1.6" fill="#22d43a"/>
<rect x="274.5" y="177.7" width="6" height="6" fill="#fff" stroke="#333" stroke-width=".8"/>
<text x="289.5" y="70" font-family="Liberation Sans,sans-serif" font-size="7" fill="#e2474d" letter-spacing="-.3">TOP</text>
<text x="121" y="155.2" font-family="Liberation Sans,sans-serif" font-size="7" fill="#a27a55" letter-spacing="-.2">RIGHT</text>
<text x="122.5" y="166.2" font-family="Liberation Sans,sans-serif" font-size="7" fill="#a27a55" letter-spacing="-.2">DTM1</text>
<text x="4" y="279" font-family="Liberation Sans,Noto Sans CJK SC,sans-serif" font-size="5.6" fill="#8b7470">插入模式</text>
<rect x="239" y="4.5" width="231" height="19.5" fill="#e9edf1" stroke="#cfd6dd" stroke-width=".6"/>
<rect x="239.3" y="5" width="2.6" height="18.5" fill="#c4c9cf"/>
<rect x="242.10" y="5" width="17.98" height="18.5" fill="#fdfdfe"/>
<rect x="260.88" y="5" width="17.98" height="18.5" fill="#fdfdfe"/>
<rect x="279.66" y="5" width="17.98" height="18.5" fill="#fdfdfe"/>
<rect x="298.44" y="5" width="17.98" height="18.5" fill="#fdfdfe"/>
<rect x="317.22" y="5" width="17.98" height="18.5" fill="#fdfdfe"/>
<rect x="336.00" y="5" width="17.98" height="18.5" fill="#fdfdfe"/>
<rect x="354.78" y="5" width="17.98" height="18.5" fill="#fdfdfe"/>
<rect x="373.56" y="5" width="17.98" height="18.5" fill="#fdfdfe"/>
<rect x="392.34" y="5" width="17.98" height="18.5" fill="#fdfdfe"/>
<rect x="411.12" y="5" width="17.98" height="18.5" fill="#fdfdfe"/>
<rect x="430.10" y="5.3" width="17.38" height="17.9" fill="#dfe3e7" stroke="#aeb4bb" stroke-width=".8"/>
<rect x="448.88" y="5.3" width="17.38" height="17.9" fill="#dfe3e7" stroke="#aeb4bb" stroke-width=".8"/>
<g transform="translate(241.70 5)"><rect x="4.2" y="4.2" width="9.6" height="9.6" fill="#f4f6f8" stroke="#8c9299" stroke-width=".9"/><circle cx="8.6" cy="8.6" r="3.2" fill="#e8f4fb" stroke="#3f8fc4" stroke-width="1"/><path d="M11 11.2l2.6 2.8" stroke="#8a8f96" stroke-width="1.6" stroke-linecap="round"/></g>
<g transform="translate(260.48 5)"><circle cx="8" cy="7.6" r="3.2" fill="#e8f4fb" stroke="#3f8fc4" stroke-width="1"/><path d="M10.4 10.2l2.6 2.8" stroke="#8a8f96" stroke-width="1.6" stroke-linecap="round"/><circle cx="8" cy="7.6" r="2.1" fill="#2f86c6"/><path d="M6.4 7.6h3.2M8 6v3.2" stroke="#fff" stroke-width=".9"/></g>
<g transform="translate(279.26 5)"><circle cx="8" cy="7.6" r="3.2" fill="#e8f4fb" stroke="#3f8fc4" stroke-width="1"/><path d="M10.4 10.2l2.6 2.8" stroke="#8a8f96" stroke-width="1.6" stroke-linecap="round"/><rect x="6" y="6.7" width="4" height="1.8" fill="#2f86c6"/></g>
<g transform="translate(298.04 5)"><defs><linearGradient id="rp" x1="0" y1="0" x2="1" y2="1"><stop offset="0" stop-color="#fff"/><stop offset=".5" stop-color="#e6f3f8"/><stop offset=".52" stop-color="#2d95b8"/><stop offset="1" stop-color="#9fd3e4"/></linearGradient></defs><rect x="4.3" y="4.3" width="10" height="10" fill="url(#rp)" stroke="#8c9aa4" stroke-width=".9"/></g>
<g transform="translate(316.82 5)"><path d="M3.6 6.6L6 4.2H13.8V11.6L11.4 14H3.6Z" fill="#fdfeff" stroke="#6cc0e2" stroke-width=".9"/><path d="M3.6 6.6H11.4V14M11.4 6.6L13.8 4.2" fill="none" stroke="#6cc0e2" stroke-width=".9"/><path d="M11.4 6.6L13.8 4.2V11.6L11.4 14Z" fill="#bfe3f3"/><path d="M16.6 13.6v2.6h-2.6Z" fill="#555"/></g>
<g transform="translate(335.60 5)"><path d="M3.6 6.6L6 4.2H13.8V11.6L11.4 14H3.6Z" fill="#fdfeff" stroke="#6cc0e2" stroke-width=".9"/><path d="M3.6 6.6H11.4V14M11.4 6.6L13.8 4.2" fill="none" stroke="#6cc0e2" stroke-width=".9"/><path d="M11.4 6.6L13.8 4.2V11.6L11.4 14Z" fill="#bfe3f3"/><rect x="9.6" y="9" width="5" height="6" fill="#e4e6e8" stroke="#9a9ea4" stroke-width=".7"/><path d="M10.8 11h2.6M10.8 12.6h2.6" stroke="#9a9ea4" stroke-width=".6"/><path d="M16.6 13.6v2.6h-2.6Z" fill="#555"/></g>
<g transform="translate(354.38 5)"><path d="M3.6 4.4h7.8M3.6 6.8h7.8M3.6 9.2h5M3.6 11.6h4M3.6 13.8h4" stroke="#8a9098" stroke-width="1.1"/><path d="M3.6 4v10.4" stroke="#8a9098" stroke-width=".8"/><rect x="8.4" y="9.4" width="7" height="5.2" rx=".6" fill="#333"/><rect x="10.2" y="8.4" width="3" height="1.4" fill="#333"/><circle cx="11.9" cy="12" r="1.5" fill="#9aa0a8"/></g>
<g transform="translate(373.16 5)"><path d="M3.6 8L6.4 5.6H12.2V11.6L9.6 14H3.6Z" fill="#fdfeff" stroke="#8fa3b0" stroke-width=".8"/><path d="M9.6 8L12.2 5.6V11.6L9.6 14Z" fill="#4fb0e0"/><path d="M3.6 8H9.6V14" fill="none" stroke="#8fa3b0" stroke-width=".8"/><path d="M15.4 10.4H11.4M11.4 10.4l1.8-1.6M11.4 10.4l1.8 1.6" stroke="#222" stroke-width="1.1" fill="none"/></g>
<g transform="translate(391.94 5)"><path d="M3.9000000000000004 3.5l2.6 2.6M6.5 3.5l-2.6 2.6" stroke="#9a7a32" stroke-width="1.1"/><path d="M9.6 3.6l-1.2 2.6M6.6 9.6l-1.2 2.8" stroke="#9a7a32" stroke-width="1.1"/><path d="M9 7.6l4 4M13 7.6l-4 4" stroke="#9a7a32" stroke-width="1.1"/><path d="M11 6.6v6M8.2 9.6h5.6" stroke="#9a7a32" stroke-width="1"/><path d="M16 13.2v2.6h-2.6Z" fill="#555"/></g>
<g transform="translate(410.72 5)"><path d="M4.1000000000000005 3.7l2.6 2.6M6.7 3.7l-2.6 2.6" stroke="#9a7a32" stroke-width="1.1"/><path d="M9.5 5.1000000000000005l2.6 2.6M12.100000000000001 5.1000000000000005l-2.6 2.6" stroke="#9a7a32" stroke-width="1.1"/><path d="M3.3 9.1l2.6 2.6M5.8999999999999995 9.1l-2.6 2.6" stroke="#9a7a32" stroke-width="1.1"/><ellipse cx="10.8" cy="12.2" rx="3.2" ry="1.9" fill="#2b2b2b"/><circle cx="10.8" cy="12.2" r=".9" fill="#c8ccd0"/></g>
<g transform="translate(429.50 5)"><rect x="3.2" y="4.4" width="7.2" height="3.6" fill="#fbeec2" stroke="#b9a36a" stroke-width=".7"/><path d="M10.6 6.2h3.2v3.4" fill="none" stroke="#333" stroke-width="1"/><path d="M12.2 8.6l1.6 1.8l1.6-1.8Z" fill="#333"/><ellipse cx="12.6" cy="13" rx="3.2" ry="1.8" fill="#2b2b2b"/><circle cx="12.6" cy="13" r=".9" fill="#c8ccd0"/></g>
<g transform="translate(448.28 5)"><path d="M6 4.8L8.8 9.2L13.4 8M8.8 9.2L6.2 13.4" stroke="#6a7178" stroke-width="1" fill="none"/><circle cx="6" cy="4.8" r="1.9" fill="#3fae49"/><circle cx="13.4" cy="8" r="1.9" fill="#e0473f"/><circle cx="6.2" cy="13.4" r="1.9" fill="#2f8fd0"/></g>
<defs><linearGradient id="hx" x1="0" y1="0" x2="1" y2="0"><stop offset="0" stop-color="#2f66c0"/><stop offset=".5" stop-color="#3f86d4"/><stop offset="1" stop-color="#6cc0ee"/></linearGradient></defs>
<polygon points="501.0,266.8 479.2,278.9 479.2,303.1 501.0,315.2 522.8,303.1 522.8,278.9" fill="url(#hx)" stroke="#dfe9f5" stroke-width="1.6" stroke-linejoin="round"/>
<polygon points="501.0,277.5 489.1,284.2 489.1,297.8 501.0,304.5 512.9,297.8 512.9,284.2" fill="#3a78cc" stroke="#e8f1fa" stroke-width="2.2" stroke-linejoin="round"/>
<polygon points="501.0,281.5 492.8,286.2 501.0,291.0 509.2,286.2" fill="#5aa2e4"/>
<polygon points="492.8,286.2 492.8,295.8 501.0,300.5 501.0,291.0" fill="#3b7fd2"/>
<polygon points="509.2,286.2 501.0,291.0 501.0,300.5 509.2,295.8" fill="#2a5fb4"/>
<path d="M504.0 268.0Q521.0 277.0 522.5 297.0L514.0 294.0Q512.0 281.0 504.0 268.0Z" fill="#7fcaf2" opacity=".75"/>
<path d="M479.5 299.0Q489.0 311.0 503.0 314.0L500.0 305.0Q491.0 303.0 479.5 299.0Z" fill="#62b4ea" opacity=".7"/>
<text x="526.5" y="295.5" font-family="Liberation Sans,Noto Sans CJK SC,sans-serif" font-weight="700" font-size="21.5" fill="#3d9fe2" stroke="#e9f2fa" stroke-width="2.4" paint-order="stroke" stroke-linejoin="round" textLength="102" lengthAdjust="spacingAndGlyphs">3D世界网</text>
<text x="527" y="307" font-family="Liberation Sans,sans-serif" font-weight="700" font-size="8.6" fill="#3d9fe2" stroke="#e9f2fa" stroke-width="1.6" paint-order="stroke" stroke-linejoin="round" textLength="100" lengthAdjust="spacingAndGlyphs">WWW.3DSJW.COM</text>
</svg><!--/WIRE--><!--VT--><!--/VT--><!--WM--><!--/WM--></div>
<div id="status" class="abs"><i style="position:absolute;left:650px;top:2px;width:26px;height:6px;border:1px solid #dcdcdc;border-radius:1px"></i><i style="position:absolute;left:619px;top:1px;width:1px;height:6px;background:#e2e2e2"></i></div>
</body>
</html>
